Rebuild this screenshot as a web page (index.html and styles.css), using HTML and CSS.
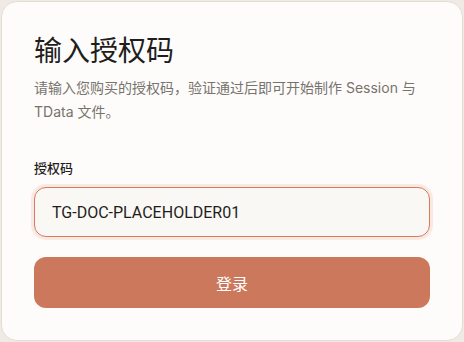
FILE: index.html
```html
<!DOCTYPE html>
<html lang="zh-CN">
<head>
<meta charset="UTF-8">
<meta name="viewport" content="width=device-width, initial-scale=1.0">
<title>授权登录</title>
<link rel="stylesheet" href="styles.css">
</head>
<body>

<div class="login-card">
    <h1 class="login-title">输入授权码</h1>
    <p class="login-desc">请输入您购买的授权码，验证通过后即可开始制作 Session 与 TData 文件。</p>

    <label class="field-label" for="license-input">授权码</label>
    <input type="text" id="license-input" class="license-input" value="TG-DOC-PLACEHOLDER01">

    <button class="login-btn">登录</button>
</div>

</body>
</html>
```

FILE: styles.css
```css
body {
    margin: 0;
    padding: 1px;
    background-color: #efebe4;
    font-family: Inter, "Noto Sans CJK SC", sans-serif;
    color: #1f1e1c;
}

.login-card {
    width: 396px;
    padding: 32px;
    background-color: #fefcfb;
    border: 1px solid #e3ded5;
    border-radius: 16px;
    display: flex;
    flex-direction: column;
}

.login-title {
    margin: 0;
    font-size: 28px;
    font-weight: 400;
    line-height: 34px;
    color: #1f1e1c;
}

.login-desc {
    margin: 8px 0 0 0;
    font-size: 14px;
    line-height: 24px;
    color: #77736d;
}

.field-label {
    margin-top: 34px;
    font-size: 13px;
    line-height: 20px;
    font-weight: 500;
    color: #1f1e1c;
}

.license-input {
    margin-top: 9px;
    height: 50px;
    box-sizing: border-box;
    padding: 0 17px;
    font-family: Roboto, "Noto Sans CJK SC", sans-serif;
    font-size: 16px;
    color: #1f1e1c;
    background-color: #faf8f5;
    border: 1px solid #d87a5b;
    border-radius: 12px;
    box-shadow: 0 0 0 3px rgba(216, 122, 91, 0.14);
    outline: none;
}

.login-btn {
    margin-top: 20px;
    height: 51px;
    font-family: Inter, "Noto Sans CJK SC", sans-serif;
    font-size: 16px;
    font-weight: 400;
    color: #fff;
    background-color: #cc785c;
    border: none;
    border-radius: 12px;
    cursor: pointer;
}
```
